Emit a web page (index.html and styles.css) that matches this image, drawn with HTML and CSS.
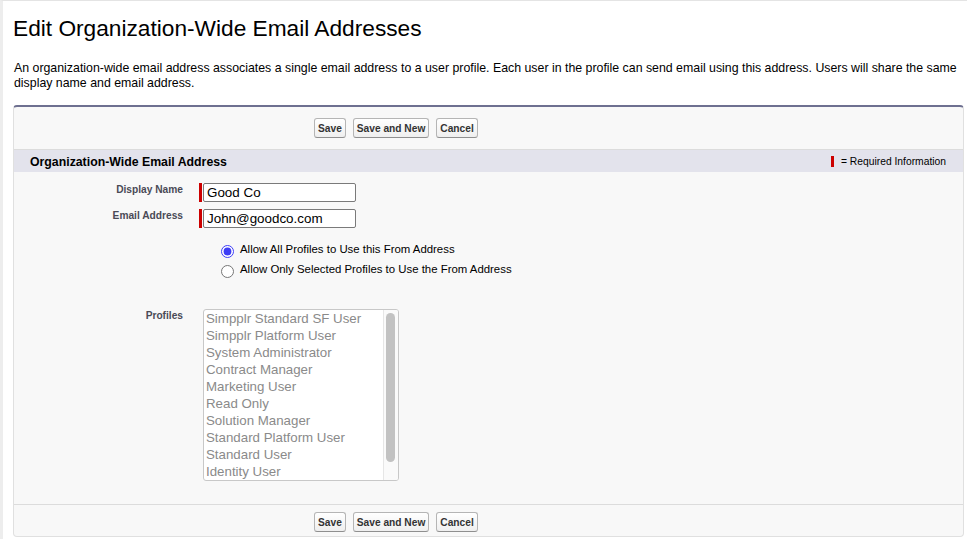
FILE: index.html
```html
<!DOCTYPE html>
<html lang="en">
<head>
<meta charset="utf-8">
<title>Edit Organization-Wide Email Addresses</title>
<link rel="stylesheet" href="styles.css">
</head>
<body>
<div class="page">
  <h1 class="title">Edit Organization-Wide Email Addresses</h1>
  <p class="intro">An organization-wide email address associates a single email address to a user profile. Each user in the profile can send email using this address. Users will share the same display name and email address.</p>
  <div class="block">
    <div class="btnbar btnbar-top">
      <button class="btn" type="button">Save</button>
      <button class="btn" type="button">Save and New</button>
      <button class="btn" type="button">Cancel</button>
    </div>
    <div class="subhead">
      <h2 class="subhead-title">Organization-Wide Email Address</h2>
      <span class="req-legend"><span class="req-mark"></span>= Required Information</span>
    </div>
    <div class="form">
      <div class="row row-input">
        <label class="label" for="dn">Display Name</label>
        <div class="field"><span class="req-bar"></span><input class="text" id="dn" type="text" value="Good Co"></div>
      </div>
      <div class="row row-input">
        <label class="label" for="em">Email Address</label>
        <div class="field"><span class="req-bar"></span><input class="text" id="em" type="text" value="John@goodco.com"></div>
      </div>
      <div class="row row-radios">
        <span class="label"></span>
        <div class="radio-list">
          <label class="radio-row"><input class="radio" type="radio" name="mode" checked><span>Allow All Profiles to Use this From Address</span></label>
          <label class="radio-row"><input class="radio" type="radio" name="mode"><span>Allow Only Selected Profiles to Use the From Address</span></label>
        </div>
      </div>
      <div class="row row-profiles">
        <span class="label">Profiles</span>
        <div class="listbox">
          <ul class="options">
            <li>Simpplr Standard SF User</li>
            <li>Simpplr Platform User</li>
            <li>System Administrator</li>
            <li>Contract Manager</li>
            <li>Marketing User</li>
            <li>Read Only</li>
            <li>Solution Manager</li>
            <li>Standard Platform User</li>
            <li>Standard User</li>
            <li>Identity User</li>
          </ul>
          <div class="scroll"><div class="thumb"></div></div>
        </div>
      </div>
    </div>
    <div class="btnbar btnbar-bottom">
      <button class="btn" type="button">Save</button>
      <button class="btn" type="button">Save and New</button>
      <button class="btn" type="button">Cancel</button>
    </div>
  </div>
</div>
</body>
</html>
```
FILE: styles.css
```css
* { box-sizing: border-box; }
html, body { margin: 0; padding: 0; background: #fff; }
body { font-family: "Liberation Sans", Arial, sans-serif; color: #000; }

.page {
  border-top: 1px solid #e4e4e4;
  border-left: 3px solid #ededed;
  padding: 0 3px 2px 10px;
  min-height: 539px;
}

.title {
  margin: 14px 0 0 0;
  font-size: 22.7px;
  line-height: 26px;
  font-weight: normal;
  color: #000;
}

.intro {
  margin: 20px 0 0 1px;
  font-size: 12.35px;
  line-height: 15px;
  color: #000;
}

.block {
  margin-top: 14px;
  background: #f8f8f8;
  border: 1px solid #e0e0e0;
  border-top: 2px solid #6e7090;
  border-radius: 4px;
}

.btnbar {
  display: flex;
  gap: 7px;
  padding-left: 300px;
}
.btnbar-top {
  padding-top: 11px;
  padding-bottom: 11px;
  border-bottom: 1px solid #dcdcdc;
}
.btnbar-bottom {
  border-top: 1px solid #dcdcdc;
  padding-top: 7px;
  padding-bottom: 4px;
}

.btn {
  height: 20px;
  margin: 0;
  padding: 0 3px;
  font-family: "Liberation Sans", Arial, sans-serif;
  font-size: 10.2px;
  font-weight: bold;
  color: #333;
  background: linear-gradient(#ffffff, #efefef);
  border: 1px solid #b5b5b5;
  border-bottom-color: #8f8f8f;
  border-radius: 3px;
}

.subhead {
  display: flex;
  justify-content: space-between;
  align-items: center;
  height: 22px;
  padding: 0 17px 0 16px;
  background: #e3e3ec;
}
.subhead-title {
  margin: 0;
  font-size: 12.3px;
  font-weight: bold;
  line-height: 16px;
  padding-top: 1px;
  color: #000;
}
.req-legend {
  display: flex;
  align-items: center;
  font-size: 10.3px;
  color: #000;
}
.req-mark {
  display: inline-block;
  width: 3px;
  height: 11px;
  background: #cc0000;
  margin-right: 7px;
}

.form {
  padding: 11px 0 23px 0;
}
.row {
  display: grid;
  grid-template-columns: 169px 1fr;
  column-gap: 16px;
  align-items: start;
}
.row-input { height: 19px; }
.row-input + .row-input { margin-top: 7px; }
.label {
  text-align: right;
  font-size: 10.2px;
  font-weight: bold;
  line-height: 14px;
  color: #4a4a56;
}
.field {
  display: flex;
  height: 19px;
}
.req-bar {
  width: 3px;
  height: 19px;
  background: #c00;
  margin-right: 1px;
}
.text {
  width: 153px;
  height: 19px;
  margin: 0;
  padding: 0 3px;
  font-family: "Liberation Sans", Arial, sans-serif;
  font-size: 13.4px;
  color: #000;
  background: #fff;
  border: 1px solid #7a7a7a;
  border-radius: 2px;
  outline: none;
}

.row-radios { margin-top: 14px; }
.radio-list {
  padding-left: 22px;
}
.radio-row {
  display: flex;
  align-items: flex-start;
  height: 20px;
  font-size: 11.4px;
  line-height: 14px;
  color: #000;
}
.radio {
  width: 13px;
  height: 13px;
  margin: 3px 6px 0 0;
  accent-color: #3d3df5;
}

.row-profiles { margin-top: 27px; }
.listbox {
  display: flex;
  width: 196px;
  height: 172px;
  margin-left: 4px;
  background: #fff;
  border: 1px solid #c8c8c8;
  border-radius: 3px;
  overflow: hidden;
}
.options {
  flex: 1;
  margin: 0;
  padding: 0 0 0 2px;
  list-style: none;
  font-size: 13.3px;
  line-height: 17px;
  color: #8a8a8a;
}
.scroll {
  width: 15px;
  border-left: 1px solid #e6e6e6;
  padding: 3px 2px 0 2px;
  background: #fafafa;
}
.thumb {
  width: 9px;
  height: 149px;
  background: #c2c2c2;
  border-radius: 5px;
}
```
